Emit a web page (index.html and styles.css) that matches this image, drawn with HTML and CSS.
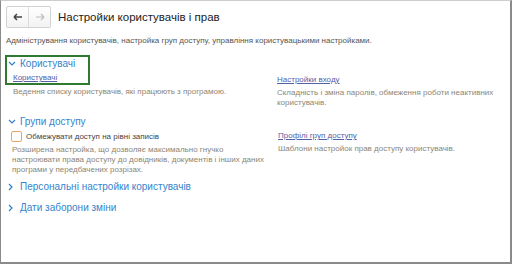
FILE: index.html
```html
<!DOCTYPE html>
<html lang="uk">
<head>
<meta charset="UTF-8"><meta name="viewport" content="width=device-width, initial-scale=1">
<title>Настройки користувачів і прав</title>
<link rel="stylesheet" href="styles.css">
</head>
<body>
<div class="frame">
  <div class="top">
    <div class="nav">
      <span class="navbtn"><svg width="10" height="8" viewBox="0 0 10 8"><path d="M1 4h8M1 4l3-3M1 4l3 3" stroke="#444" stroke-width="1.5" fill="none"/></svg></span>
      <span class="navbtn"><svg width="10" height="8" viewBox="0 0 10 8"><path d="M1 4h8M9 4l-3-3M9 4l-3 3" stroke="#bdbdbd" stroke-width="1.2" fill="none"/></svg></span>
    </div>
    <h1>Настройки користувачів і прав</h1>
  </div>

  <p class="intro">Адміністрування користувачів, настройка груп доступу, управління користувацькими настройками.</p>

  <div class="grid g1">
    <div class="cell">
      <div class="focus">
        <div class="ghead"><svg class="chev" width="10" height="6" viewBox="0 0 10 6"><path d="M1 1l3 3 3-3" stroke="#2f80c8" stroke-width="1.2" fill="none"/></svg>Користувачі</div>
        <a class="link" href="#">Користувачі</a>
      </div>
      <p class="note">Ведення списку користувачів, які працюють з програмою.</p>
    </div>
    <div class="cell right">
      <a class="link" href="#">Настройки входу</a>
      <p class="note">Складність і зміна паролів, обмеження роботи неактивних користувачів.</p>
    </div>
  </div>

  <div class="ghead g2"><svg class="chev" width="10" height="6" viewBox="0 0 10 6"><path d="M1 1l3 3 3-3" stroke="#2f80c8" stroke-width="1.2" fill="none"/></svg>Групи доступу</div>
  <div class="grid">
    <div class="cell">
      <label class="check"><span class="box"></span>Обмежувати доступ на рівні записів</label>
      <p class="note wrap">Розширена настройка, що дозволяє максимально гнучко настроювати права доступу до довідників, документів і інших даних програми у передбачених розрізах.</p>
    </div>
    <div class="cell">
      <a class="link" href="#">Профілі груп доступу</a>
      <p class="note">Шаблони настройок прав доступу користувачів.</p>
    </div>
  </div>

  <div class="ghead g3"><svg class="chev" width="10" height="8" viewBox="0 0 10 8"><path d="M1 1l3 3-3 3" stroke="#2f80c8" stroke-width="1.2" fill="none"/></svg>Персональні настройки користувачів</div>
  <div class="ghead g4"><svg class="chev" width="10" height="8" viewBox="0 0 10 8"><path d="M1 1l3 3-3 3" stroke="#2f80c8" stroke-width="1.2" fill="none"/></svg>Дати заборони зміни</div>
</div>
</body>
</html>
```

FILE: styles.css
```css
html,body{margin:0;background:#fff}
body{font-family:"Liberation Sans",Arial,sans-serif;color:#333}
p{margin:0}
.frame{box-sizing:border-box;width:512px;height:264px;border-top:1px solid #cdcdcd;border-left:1px solid #8a8a8a;border-right:2px solid #8a8a8a;border-bottom:2px solid #8a8a8a;padding:5px 0 0 5px}
.top{display:flex;align-items:center;gap:7px}
.nav{display:flex;border:1px solid #d2d2d2;border-radius:2px;background:linear-gradient(#fff,#f2f2f2)}
.navbtn{width:21px;height:20px;display:flex;align-items:center;justify-content:center}
.navbtn+.navbtn{border-left:1px solid #dcdcdc}
h1{margin:0 0 1px;font-size:11.5px;font-weight:normal;color:#222}
.intro{margin-top:8px;font-size:8px;line-height:10px;color:#555}
.grid{display:grid;grid-template-columns:266px 1fr;padding-left:6px}
.g1{margin:9px 0 0 -1px;padding-left:0;grid-template-columns:272px 1fr}
.g1 .note{margin:2px 0 0 8px}
.g1 .right .note{margin:3px 0 0}
.right{padding-top:18px}
.focus{display:inline-block;border:2px solid #2f7a30;padding:0 13px 0 0}
.ghead{font-size:10px;line-height:14px;color:#3584cc;display:flex;align-items:center}
.focus .ghead{padding-left:1px}
.chev{margin-right:2px;flex:none}
.g2{margin:7px 0 0 2px}
.g3{margin:5px 0 0 2px}
.g4{margin:7px 0 0 2px}
.link{display:block;font-size:8px;line-height:10px;color:#5262a8;margin-top:2px}
.focus .link{margin-left:6px}
.note{margin-top:3px;font-size:8px;line-height:10px;color:#8c8676}
.note.wrap{width:254px}
.check{display:flex;align-items:center;font-size:8px;line-height:10px;color:#444;margin-top:2px}
.box{box-sizing:border-box;width:11px;height:11px;border:1px solid #eba463;border-radius:2px;margin:0 4px 0 -1px;background:#fff}
```
